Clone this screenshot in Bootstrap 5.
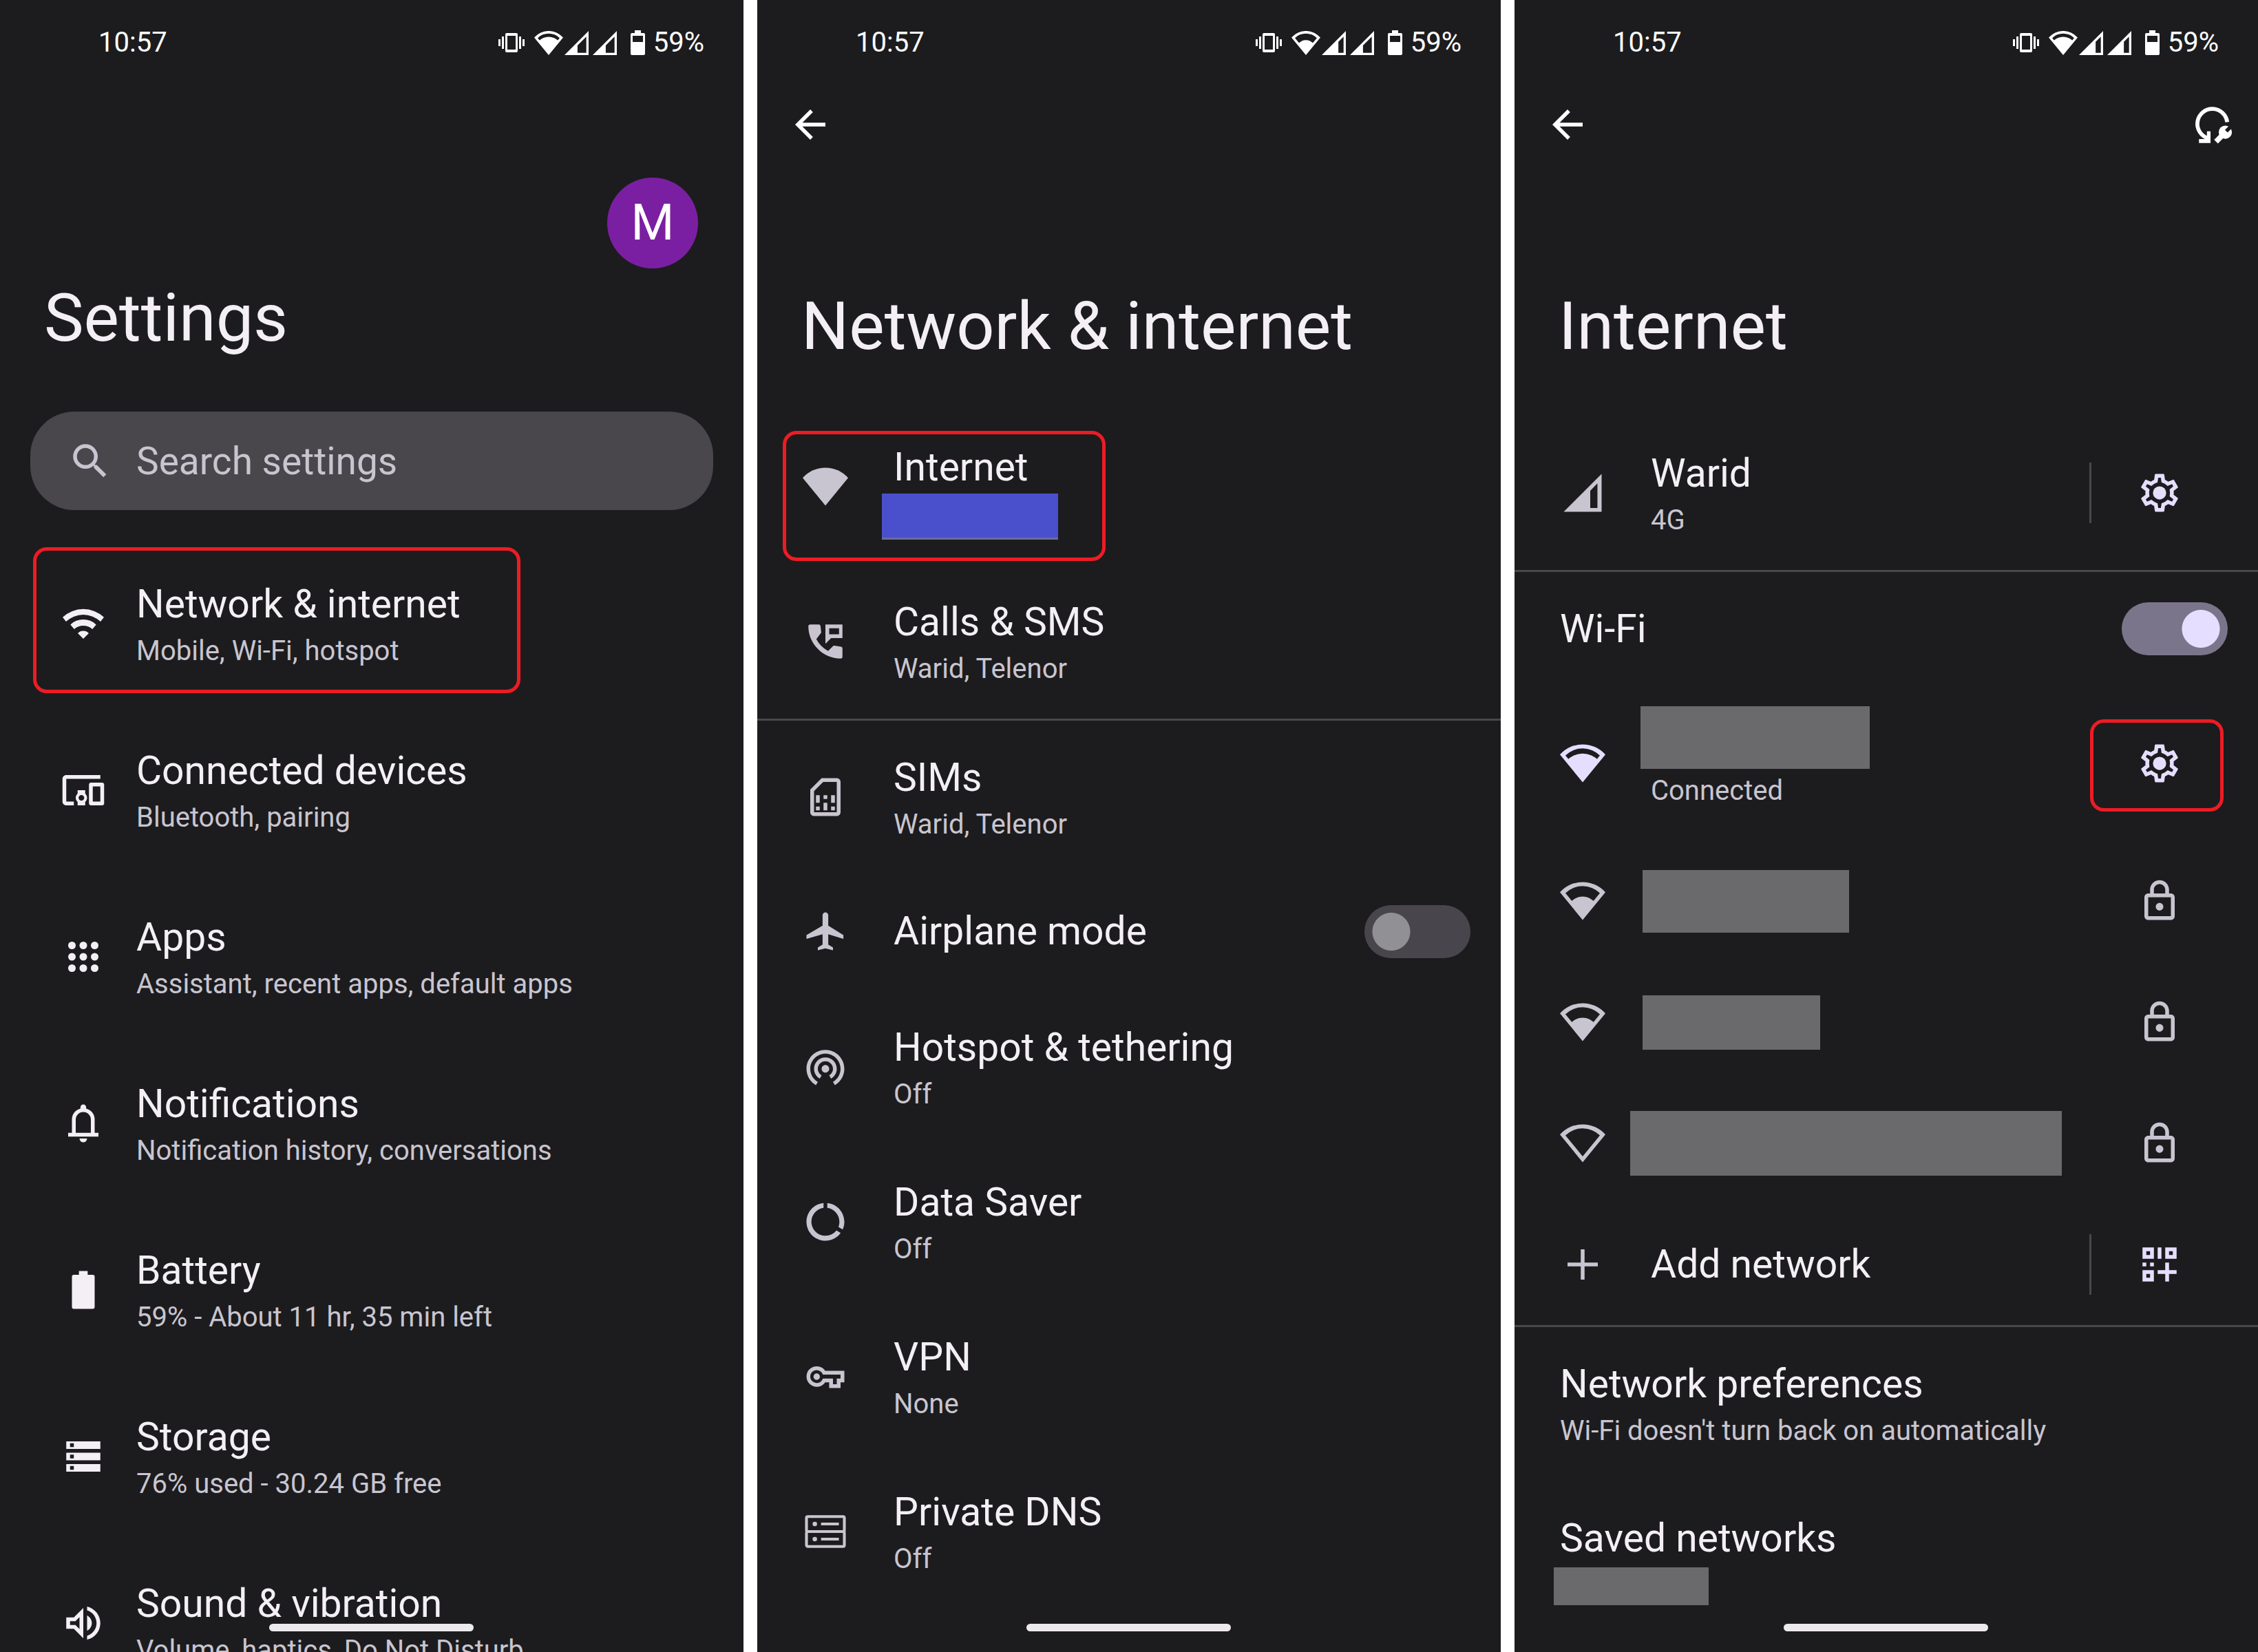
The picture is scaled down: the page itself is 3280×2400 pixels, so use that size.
<!DOCTYPE html>
<html lang="en">
<head>
<meta charset="utf-8">
<meta name="viewport" content="width=device-width, initial-scale=1">
<title>Settings</title>
<link href="https://cdn.jsdelivr.net/npm/bootstrap@5.3.0/dist/css/bootstrap.min.css" rel="stylesheet">
<style>
  :root { --panel: #1c1c1e; --ink: #f4eff4; --soft: #c9c5d0; --accent: #e6deff; --line: #48484a; --gutter: 66px; }
  body { background: #fff; font-family: Roboto, "Liberation Sans", sans-serif; color: var(--ink); }
  .screens { gap: 20px; }
  .screen { flex: 1 1 0; min-width: 0; height: 100vh; background: var(--panel); }
  .ico { width: 66px; height: 66px; fill: currentColor; display: block; flex: none; }
  .ico-btn { padding: 0; border: 0; background: none; color: inherit; }

  .statusbar { height: 124px; padding: 0 57px 0 143px; color: #fff; font-size: 40px; line-height: 48px; }
  .statusbar svg { fill: currentColor; flex: none; display: block; }
  .s-vibe { width: 38px; height: 28px; margin-right: 14px; }
  .s-wifi { width: 42px; height: 35px; margin-right: 2px; }
  .s-cell { width: 35px; height: 35px; margin-right: 6px; }
  .s-batt { width: 21px; height: 36px; margin: 0 12px 0 14px; }

  .toolbar { height: 114px; padding: 0 31px 0 44px; color: #fff; }
  .page-title { font-size: 97px; line-height: 112px; font-weight: 400; margin: 180px 64px 0; }
  .avatar-row { padding: 134px var(--gutter) 0; }
  .avatar-row + .page-title { margin-top: 16px; }
  .avatar { width: 132px; height: 132px; background: #7b1fa2; color: #fff; font-size: 72px; }

  .search { margin: 80px 44px 44px; height: 143px; border-radius: 64px; background: #49464c; color: var(--soft); padding: 0 54px; gap: 34px; }
  .search .form-control { background: none; border: 0; padding: 0; color: inherit; font-size: 55px; line-height: 80px; box-shadow: none; }
  .search .form-control::placeholder { color: var(--soft); opacity: 1; }

  .pref-list { margin: 64px 0 0; }
  .pref-list-main { margin-top: 0; }
  .pref-list-net { margin-top: 73px; }
  .pref { min-height: 225px; padding: 0 44px 0 var(--gutter); color: var(--ink); text-decoration: none; position: relative; }
  .pref-list-main .pref { min-height: 242px; padding-left: 88px; }
  .pref-one { min-height: 168px; }
  .pref-ap { min-height: 176px; }
  .pref-end { padding-right: 110px; }
  .pref-rule { border-top: 3px solid var(--line); }
  .pref .lead-ico { margin-right: 66px; color: var(--soft); }
  .pref-list-main .lead-ico { margin-right: 44px; color: var(--ink); }
  .pref .lit { color: var(--accent); }
  .pref .lock-ico { color: var(--soft); }
  .pref-name { font-size: 57px; line-height: 80px; min-height: 80px; position: relative; }
  .pref-note { font-size: 40px; line-height: 56px; min-height: 56px; color: var(--soft); position: relative; }
  .split { width: 3px; height: 88px; background: var(--line); margin-right: 66px; }

  .mask { display: block; background: #6a6a6c; }
  .mask-over { position: absolute; }
  .mask-addr { left: -17px; top: -2px; width: 256px; height: 67px; background: #4a50cc; border-bottom: 3px solid #6c6a9c; }
  .mask-ssid { left: -15px; top: -15px; width: 333px; height: 91px; }
  .mask-count { left: -9px; top: 2px; width: 225px; height: 55px; }
  .mask-a { width: 300px; height: 91px; margin-left: -12px; }
  .mask-b { width: 258px; height: 79px; margin-left: -12px; }
  .mask-c { width: 627px; height: 94px; margin-left: -30px; }

  .marker { position: absolute; border: 5px solid #ed1c24; border-radius: 20px; pointer-events: none; }
  .marker-menu { left: 48px; top: 10px; width: 708px; height: 212px; }
  .marker-net { left: 37px; top: 32px; width: 469px; height: 189px; }
  .marker-gear { right: 50px; top: 49px; width: 194px; height: 134px; }

  .toggle.form-check-input { width: 154px; height: 77px; margin: 0; border: 0; border-radius: 39px; background: radial-gradient(circle at 39px 50%, #919094 27px, transparent 28px), #48464c; box-shadow: none; flex: none; }
  .toggle.form-check-input:checked { background: radial-gradient(circle at 115px 50%, #e6deff 27px, transparent 28px), #7b758c; }

  .homebar { position: absolute; left: 50%; bottom: 30px; width: 297px; height: 11px; margin-left: -149px; border-radius: 6px; background: #edeaee; }
</style>
</head>
<body>
<svg class="d-none" aria-hidden="true">
  <symbol id="i-vibe" viewBox="0 0 38 28"><path fill-rule="evenodd" d="M12 0h14a2 2 0 0 1 2 2v24a2 2 0 0 1-2 2H12a2 2 0 0 1-2-2V2a2 2 0 0 1 2-2zM13 4v20h12V4z"/><path d="M5 5h3v18H5zM0 9h3v10H0zM30 5h3v18h-3zM35 9h3v10h-3z"/></symbol>
  <symbol id="i-fan" viewBox="0 0 24 24"><path d="M12 22L0 7.4A16 16 0 0 1 24 7.4z"/></symbol>
  <symbol id="i-fan0" viewBox="0 0 24 24"><path fill-rule="evenodd" d="M12 22L0 7.4A16 16 0 0 1 24 7.4zM12 18.9L21.1 7.8A13 13 0 0 0 2.9 7.8z"/></symbol>
  <symbol id="i-fan2" viewBox="0 0 24 24"><path fill-rule="evenodd" d="M12 22L0 7.4A16 16 0 0 1 24 7.4zM12 18.9L21.1 7.8A13 13 0 0 0 2.9 7.8z"/><path d="M12 21L5.6 12.8A8 8 0 0 1 18.4 12.8z"/></symbol>
  <symbol id="i-fan3" viewBox="0 0 24 24"><path fill-rule="evenodd" d="M12 22L0 7.4A16 16 0 0 1 24 7.4zM12 18.9L21.1 7.8A13 13 0 0 0 2.9 7.8z"/><path d="M12 21.5L3.5 10.6A11.5 11.5 0 0 1 20.5 10.6z"/></symbol>
  <symbol id="i-sfan2" viewBox="0 2 24 20"><path fill-rule="evenodd" d="M12 22L0 7.4A16 16 0 0 1 24 7.4zM12 18.9L21.1 7.8A13 13 0 0 0 2.9 7.8z"/><path d="M12 21L5.6 12.8A8 8 0 0 1 18.4 12.8z"/></symbol>
  <symbol id="i-sfan3" viewBox="0 2 24 20"><path fill-rule="evenodd" d="M12 22L0 7.4A16 16 0 0 1 24 7.4zM12 18.9L21.1 7.8A13 13 0 0 0 2.9 7.8z"/><path d="M12 21.5L3.5 10.6A11.5 11.5 0 0 1 20.5 10.6z"/></symbol>
  <symbol id="i-cell2" viewBox="2 2 20 20"><path fill-rule="evenodd" d="M2 22H22V2zM12.8 20.2V14L20.1 6.7V20.2z"/></symbol>
  <symbol id="i-cell3" viewBox="2 2 20 20"><path fill-rule="evenodd" d="M2 22H22V2zM15.8 20.2V11L20.1 6.7V20.2z"/></symbol>
  <symbol id="i-signal" viewBox="0 0 24 24"><path fill-rule="evenodd" d="M2 22H22V2zM16 20V10.9L19.8 7V20z"/></symbol>
  <symbol id="i-sbatt" viewBox="0 0 21 36"><path fill-rule="evenodd" d="M6 0h9v4h4a2 2 0 0 1 2 2v28a2 2 0 0 1-2 2H2a2 2 0 0 1-2-2V6a2 2 0 0 1 2-2h4zM3 8v9h15V8z"/></symbol>
  <symbol id="i-search" viewBox="0 0 24 24"><path d="M15.5 14h-.79l-.28-.27A6.47 6.47 0 0 0 16 9.5 6.5 6.5 0 1 0 9.5 16c1.61 0 3.09-.59 4.23-1.57l.27.28v.79l5 4.99L20.49 19l-4.99-5zm-6 0a4.5 4.5 0 1 1 0-9 4.5 4.5 0 0 1 0 9z"/></symbol>
  <symbol id="i-wifi" viewBox="0 0 24 24"><path d="M1.1 8.6A16 16 0 0 1 22.9 8.6L21.1 10.9A13.3 13.3 0 0 0 2.9 10.9zM5.2 12.5A9.9 9.9 0 0 1 18.8 12.5L16.8 14.9A7.2 7.2 0 0 0 7.2 14.9zM9.1 17.1A4 4 0 0 1 14.9 17.1L12 20z"/></symbol>
  <symbol id="i-devices" viewBox="0 0 24 24"><path d="M3 6h18V4H3c-1.1 0-2 .9-2 2v12c0 1.1.9 2 2 2h4v-2H3V6zm10 6H9v1.78c-.61.55-1 1.33-1 2.22s.39 1.67 1 2.22V20h4v-1.78c.61-.55 1-1.34 1-2.22s-.39-1.67-1-2.22V12zm-2 5.5c-.83 0-1.5-.67-1.5-1.5s.67-1.5 1.5-1.5 1.5.67 1.5 1.5-.67 1.5-1.5 1.5zM22 8h-6c-.5 0-1 .5-1 1v10c0 .5.5 1 1 1h6c.5 0 1-.5 1-1V9c0-.5-.5-1-1-1zm-1 10h-4v-8h4v8z"/></symbol>
  <symbol id="i-apps" viewBox="0 0 24 24"><circle cx="6" cy="6" r="2"/><circle cx="12" cy="6" r="2"/><circle cx="18" cy="6" r="2"/><circle cx="6" cy="12" r="2"/><circle cx="12" cy="12" r="2"/><circle cx="18" cy="12" r="2"/><circle cx="6" cy="18" r="2"/><circle cx="12" cy="18" r="2"/><circle cx="18" cy="18" r="2"/></symbol>
  <symbol id="i-bell" viewBox="0 0 24 24"><path d="M4 19v-2h2v-7q0-2.075 1.25-3.687Q8.5 4.7 10.5 4.2v-.7q0-.625.438-1.062Q11.375 2 12 2t1.062.438q.438.437.438 1.062v.7q2 .5 3.25 2.113Q18 7.925 18 10v7h2v2Zm8 3q-.825 0-1.412-.587Q10 20.825 10 20h4q0 .825-.587 1.413Q12.825 22 12 22Zm-4-5h8v-7q0-1.65-1.175-2.825Q13.65 6 12 6q-1.65 0-2.825 1.175Q8 8.35 8 10Z"/></symbol>
  <symbol id="i-battery" viewBox="0 0 24 24"><path d="M9.7 2h4.6v2H17a1 1 0 0 1 1 1v16a1 1 0 0 1-1 1H7a1 1 0 0 1-1-1V5a1 1 0 0 1 1-1h2.7z"/></symbol>
  <symbol id="i-storage" viewBox="0 0 24 24"><path d="M3 20h18v-4H3v4zm2-3h2v2H5v-2zM3 4v4h18V4H3zm4 3H5V5h2v2zm-4 7h18v-4H3v4zm2-3h2v2H5v-2z"/></symbol>
  <symbol id="i-sound" viewBox="0 0 24 24"><path d="M3 9v6h4l5 5V4L7 9H3zm7-.17v6.34L7.83 13H5v-2h2.83L10 8.83zM16.5 12c0-1.77-1.02-3.29-2.5-4.03v8.05c1.48-.73 2.5-2.25 2.5-4.02zM14 3.23v2.06c2.89.86 5 3.54 5 6.71s-2.11 5.85-5 6.71v2.06c4.01-.91 7-4.49 7-8.77s-2.99-7.86-7-8.77z"/></symbol>
  <symbol id="i-back" viewBox="0 0 24 24"><path d="M20 11H7.83l5.59-5.59L12 4l-8 8 8 8 1.41-1.41L7.83 13H20v-2z"/></symbol>
  <symbol id="i-reset" viewBox="0 0 24 24"><path d="M19 10.7A7.9 7.9 0 1 0 9 19.2" fill="none" stroke="currentColor" stroke-width="2.1"/><path d="M8.3 15.5h1.9v6.2H4.1v-2.1h4.2z"/><path d="M13.1 21L17.3 16.8" stroke="currentColor" stroke-width="2.8"/><circle cx="18" cy="16" r="3.5"/><path d="M18.5 15.5L22.5 11.5" stroke="#1c1c1e" stroke-width="2"/></symbol>
  <symbol id="i-calls" viewBox="0 0 24 24"><path d="M4 3h4.5a.9.9 0 0 1 .9.75l.4 3.5L7.2 10.7a15.5 15.5 0 0 0 6.2 6.3l2.5-2.5q.4-.4.9-.3l3.4.5a.9.9 0 0 1 .8.9V20a1 1 0 0 1-1 1C10.8 21 3 13.2 3 4a1 1 0 0 1 1-1z"/><path fill-rule="evenodd" d="M12 3h9v7.2h-6l-3 3zM14 5v3.2h5.2V5z"/></symbol>
  <symbol id="i-sim" viewBox="0 0 24 24"><path fill-rule="evenodd" d="M18 2h-8L4 8v12c0 1.1.9 2 2 2h12c1.1 0 2-.9 2-2V4c0-1.1-.9-2-2-2zm0 2v16H6V8.83L10.83 4H18zM7 17h2v2H7zM15 17h2v2h-2zM7 11h2v4H7zM11 15h2v4h-2zM11 11h2v2h-2zM15 11h2v4h-2z"/></symbol>
  <symbol id="i-plane" viewBox="0 0 24 24"><path d="M21.5 16v-2L13.5 9V3.5c0-.83-.67-1.5-1.5-1.5s-1.5.67-1.5 1.5V9L2 14v2l8.5-2.5V19L8 20.5V22l4-1 4 1v-1.5L13.5 19v-5.5L21.5 16z"/></symbol>
  <symbol id="i-hotspot" viewBox="0 0 24 24"><path d="M12 11c-1.1 0-2 .9-2 2s.9 2 2 2 2-.9 2-2-.9-2-2-2zm6 2c0-3.31-2.69-6-6-6s-6 2.69-6 6c0 2.22 1.21 4.15 3 5.19l1-1.74c-1.19-.7-2-1.97-2-3.45 0-2.21 1.79-4 4-4s4 1.79 4 4c0 1.48-.81 2.75-2 3.45l1 1.74c1.79-1.04 3-2.97 3-5.19zM12 3C6.48 3 2 7.48 2 13c0 3.7 2.01 6.92 4.99 8.65l1-1.73C5.61 18.53 4 15.96 4 13c0-4.42 3.58-8 8-8s8 3.58 8 8c0 2.96-1.61 5.53-4 6.92l1 1.73c2.99-1.73 5-4.95 5-8.65 0-5.52-4.48-10-10-10z"/></symbol>
  <symbol id="i-saver" viewBox="0 0 24 24"><path d="M13 2.05v2.63c3.6.5 6.4 3.6 6.4 7.32 0 1-.2 1.9-.5 2.74l2.22 1.33c.56-1.24.88-2.62.88-4.07 0-5.18-3.95-9.45-9-9.95zM12 19.4c-4.1 0-7.4-3.3-7.4-7.4 0-3.72 2.8-6.82 6.4-7.32V2.05c-5.06.5-9 4.76-9 9.95 0 5.52 4.47 10 9.99 10 3.31 0 6.24-1.61 8.06-4.09l-2.22-1.33C16.5 18.3 14.4 19.4 12 19.4z"/></symbol>
  <symbol id="i-key" viewBox="0 0 24 24"><path d="M11.3 9.9H21V14H19V17H15V14H11.3A4.4 4.4 0 1 1 11.3 9.9z" fill="none" stroke="currentColor" stroke-width="2"/><circle cx="7.4" cy="12" r="1.7"/></symbol>
  <symbol id="i-dns" viewBox="0 0 24 24"><g fill="none" stroke="currentColor" stroke-width="1.5"><rect x="2" y="4.1" width="20" height="7.9" rx=".7"/><rect x="2" y="12" width="20" height="7.9" rx=".7"/><path d="M9.7 8h9.4M9.7 16h9.4" stroke-width="1.4"/></g><circle cx="6.4" cy="8" r="1.2"/><circle cx="6.4" cy="16" r="1.2"/></symbol>
  <symbol id="i-gear" viewBox="0 0 24 24"><path d="M19.43 12.98c.04-.32.07-.64.07-.98 0-.34-.03-.66-.07-.98l2.11-1.65c.19-.15.24-.42.12-.64l-2-3.46c-.09-.16-.26-.25-.44-.25-.06 0-.12.01-.17.03l-2.49 1c-.52-.4-1.08-.73-1.69-.98l-.38-2.65C14.46 2.18 14.25 2 14 2h-4c-.25 0-.46.18-.49.42l-.38 2.65c-.61.25-1.17.59-1.69.98l-2.49-1c-.06-.02-.12-.03-.18-.03-.17 0-.34.09-.43.25l-2 3.46c-.13.22-.07.49.12.64l2.11 1.65c-.04.32-.07.65-.07.98 0 .33.03.66.07.98l-2.11 1.65c-.19.15-.24.42-.12.64l2 3.46c.09.16.26.25.44.25.06 0 .12-.01.17-.03l2.49-1c.52.4 1.08.73 1.69.98l.38 2.65c.03.24.24.42.49.42h4c.25 0 .46-.18.49-.42l.38-2.65c.61-.25 1.17-.59 1.69-.98l2.49 1c.06.02.12.03.18.03.17 0 .34-.09.43-.25l2-3.46c.12-.22.07-.49-.12-.64l-2.11-1.65zm-1.98-1.71c.04.31.05.52.05.73 0 .21-.02.43-.05.73l-.14 1.13.89.7 1.08.84-.7 1.21-1.27-.51-1.04-.42-.9.68c-.43.32-.84.56-1.25.73l-1.06.43-.16 1.13-.2 1.35h-1.4l-.19-1.35-.16-1.13-1.06-.43c-.43-.18-.83-.41-1.23-.71l-.91-.7-1.06.43-1.27.51-.7-1.21 1.08-.84.89-.7-.14-1.13c-.03-.31-.05-.54-.05-.74s.02-.43.05-.73l.14-1.13-.89-.7-1.08-.84.7-1.21 1.27.51 1.04.42.9-.68c.43-.32.84-.56 1.25-.73l1.06-.43.16-1.13.2-1.35h1.39l.19 1.35.16 1.13 1.06.43c.43.18.83.41 1.23.71l.91.7 1.06-.43 1.27-.51.7 1.21-1.07.85-.89.7.14 1.13z"/><circle cx="12" cy="12" r="3.5"/></symbol>
  <symbol id="i-lock" viewBox="0 0 24 24"><path d="M18 8h-1V6c0-2.76-2.24-5-5-5S7 3.24 7 6v2H6c-1.1 0-2 .9-2 2v10c0 1.1.9 2 2 2h12c1.1 0 2-.9 2-2V10c0-1.1-.9-2-2-2zM9 6c0-1.66 1.34-3 3-3s3 1.34 3 3v2H9V6zm9 14H6V10h12v10zm-6-3c1.1 0 2-.9 2-2s-.9-2-2-2-2 .9-2 2 .9 2 2 2z"/></symbol>
  <symbol id="i-plus" viewBox="0 0 24 24"><path d="M11 4h2v7h7v2h-7v7h-2v-7H4v-2h7z"/></symbol>
  <symbol id="i-qr" viewBox="0 0 24 24"><path fill-rule="evenodd" d="M3 3h6v6H3zM5 5v2h2V5zM15 3h6v6h-6zM17 5v2h2V5zM3 15h6v6H3zM5 17v2h2v-2zM11 3h2v6h-2zM3 11h2v2H3zM7 11h2v2H7zM15 11h2v4h4v2h-4v4h-2v-4h-4v-2h4z"/></symbol>
</svg>

<main class="screens d-flex">

  <section class="screen position-relative overflow-hidden">
    <div class="statusbar d-flex align-items-center">
      <span class="me-auto">10:57</span>
      <svg class="s-vibe"><use href="#i-vibe"/></svg><svg class="s-wifi"><use href="#i-sfan3"/></svg><svg class="s-cell"><use href="#i-cell2"/></svg><svg class="s-cell"><use href="#i-cell2"/></svg><svg class="s-batt"><use href="#i-sbatt"/></svg>
      <span>59%</span>
    </div>
    <div class="avatar-row d-flex justify-content-end">
      <button type="button" class="avatar ico-btn rounded-circle d-flex align-items-center justify-content-center">M</button>
    </div>
    <h1 class="page-title">Settings</h1>
    <div class="search d-flex align-items-center">
      <label for="q" aria-label="Search"><svg class="ico"><use href="#i-search"/></svg></label>
      <input id="q" type="text" class="form-control" placeholder="Search settings">
    </div>
    <nav class="pref-list pref-list-main">
      <a href="#" class="pref d-flex align-items-center"><svg class="ico lead-ico"><use href="#i-wifi"/></svg><div><div class="pref-name">Network &amp; internet</div><div class="pref-note">Mobile, Wi-Fi, hotspot</div></div><span class="marker marker-menu"></span></a>
      <a href="#" class="pref d-flex align-items-center"><svg class="ico lead-ico"><use href="#i-devices"/></svg><div><div class="pref-name">Connected devices</div><div class="pref-note">Bluetooth, pairing</div></div></a>
      <a href="#" class="pref d-flex align-items-center"><svg class="ico lead-ico"><use href="#i-apps"/></svg><div><div class="pref-name">Apps</div><div class="pref-note">Assistant, recent apps, default apps</div></div></a>
      <a href="#" class="pref d-flex align-items-center"><svg class="ico lead-ico"><use href="#i-bell"/></svg><div><div class="pref-name">Notifications</div><div class="pref-note">Notification history, conversations</div></div></a>
      <a href="#" class="pref d-flex align-items-center"><svg class="ico lead-ico"><use href="#i-battery"/></svg><div><div class="pref-name">Battery</div><div class="pref-note">59% - About 11 hr, 35 min left</div></div></a>
      <a href="#" class="pref d-flex align-items-center"><svg class="ico lead-ico"><use href="#i-storage"/></svg><div><div class="pref-name">Storage</div><div class="pref-note">76% used - 30.24 GB free</div></div></a>
      <a href="#" class="pref d-flex align-items-center"><svg class="ico lead-ico"><use href="#i-sound"/></svg><div><div class="pref-name">Sound &amp; vibration</div><div class="pref-note">Volume, haptics, Do Not Disturb</div></div></a>
    </nav>
    <div class="homebar"></div>
  </section>

  <section class="screen position-relative overflow-hidden">
    <div class="statusbar d-flex align-items-center">
      <span class="me-auto">10:57</span>
      <svg class="s-vibe"><use href="#i-vibe"/></svg><svg class="s-wifi"><use href="#i-sfan2"/></svg><svg class="s-cell"><use href="#i-cell3"/></svg><svg class="s-cell"><use href="#i-cell2"/></svg><svg class="s-batt"><use href="#i-sbatt"/></svg>
      <span>59%</span>
    </div>
    <div class="toolbar d-flex align-items-center">
      <button type="button" class="ico-btn" aria-label="Back"><svg class="ico"><use href="#i-back"/></svg></button>
    </div>
    <h1 class="page-title">Network &amp; internet</h1>
    <nav class="pref-list">
      <a href="#" class="pref d-flex align-items-center"><svg class="ico lead-ico"><use href="#i-fan"/></svg><div><div class="pref-name">Internet</div><div class="pref-note"><span class="mask mask-over mask-addr"></span></div></div><span class="marker marker-net"></span></a>
      <a href="#" class="pref d-flex align-items-center"><svg class="ico lead-ico"><use href="#i-calls"/></svg><div><div class="pref-name">Calls &amp; SMS</div><div class="pref-note">Warid, Telenor</div></div></a>
      <a href="#" class="pref pref-rule d-flex align-items-center"><svg class="ico lead-ico"><use href="#i-sim"/></svg><div><div class="pref-name">SIMs</div><div class="pref-note">Warid, Telenor</div></div></a>
      <div class="pref pref-one d-flex align-items-center"><svg class="ico lead-ico"><use href="#i-plane"/></svg><label class="pref-name me-auto" for="airplane">Airplane mode</label><input id="airplane" class="form-check-input toggle" type="checkbox" role="switch"></div>
      <a href="#" class="pref d-flex align-items-center"><svg class="ico lead-ico"><use href="#i-hotspot"/></svg><div><div class="pref-name">Hotspot &amp; tethering</div><div class="pref-note">Off</div></div></a>
      <a href="#" class="pref d-flex align-items-center"><svg class="ico lead-ico"><use href="#i-saver"/></svg><div><div class="pref-name">Data Saver</div><div class="pref-note">Off</div></div></a>
      <a href="#" class="pref d-flex align-items-center"><svg class="ico lead-ico"><use href="#i-key"/></svg><div><div class="pref-name">VPN</div><div class="pref-note">None</div></div></a>
      <a href="#" class="pref d-flex align-items-center"><svg class="ico lead-ico"><use href="#i-dns"/></svg><div><div class="pref-name">Private DNS</div><div class="pref-note">Off</div></div></a>
    </nav>
    <div class="homebar"></div>
  </section>

  <section class="screen position-relative overflow-hidden">
    <div class="statusbar d-flex align-items-center">
      <span class="me-auto">10:57</span>
      <svg class="s-vibe"><use href="#i-vibe"/></svg><svg class="s-wifi"><use href="#i-sfan3"/></svg><svg class="s-cell"><use href="#i-cell3"/></svg><svg class="s-cell"><use href="#i-cell3"/></svg><svg class="s-batt"><use href="#i-sbatt"/></svg>
      <span>59%</span>
    </div>
    <div class="toolbar d-flex align-items-center justify-content-between">
      <button type="button" class="ico-btn" aria-label="Back"><svg class="ico"><use href="#i-back"/></svg></button>
      <button type="button" class="ico-btn" aria-label="Reset"><svg class="ico"><use href="#i-reset"/></svg></button>
    </div>
    <h1 class="page-title">Internet</h1>
    <div class="pref-list pref-list-net">
      <div class="pref pref-end d-flex align-items-center"><svg class="ico lead-ico"><use href="#i-signal"/></svg><div class="me-auto"><div class="pref-name">Warid</div><div class="pref-note">4G</div></div><span class="split"></span><button type="button" class="ico-btn lit" aria-label="Warid settings"><svg class="ico"><use href="#i-gear"/></svg></button></div>
      <div class="pref pref-one pref-rule d-flex align-items-center"><label class="pref-name me-auto" for="wifi">Wi-Fi</label><input id="wifi" class="form-check-input toggle" type="checkbox" role="switch" checked></div>
      <div class="pref pref-end d-flex align-items-center"><svg class="ico lead-ico lit"><use href="#i-fan3"/></svg><div class="me-auto"><div class="pref-name"><span class="mask mask-over mask-ssid"></span></div><div class="pref-note">Connected</div></div><button type="button" class="ico-btn lit" aria-label="Network details"><svg class="ico"><use href="#i-gear"/></svg></button><span class="marker marker-gear"></span></div>
      <a href="#" class="pref pref-ap pref-end d-flex align-items-center" aria-label="Secured network"><svg class="ico lead-ico"><use href="#i-fan2"/></svg><span class="mask mask-a me-auto"></span><svg class="ico lock-ico"><use href="#i-lock"/></svg></a>
      <a href="#" class="pref pref-ap pref-end d-flex align-items-center" aria-label="Secured network"><svg class="ico lead-ico"><use href="#i-fan2"/></svg><span class="mask mask-b me-auto"></span><svg class="ico lock-ico"><use href="#i-lock"/></svg></a>
      <a href="#" class="pref pref-ap pref-end d-flex align-items-center" aria-label="Secured network"><svg class="ico lead-ico"><use href="#i-fan0"/></svg><span class="mask mask-c me-auto"></span><svg class="ico lock-ico"><use href="#i-lock"/></svg></a>
      <div class="pref pref-ap pref-end d-flex align-items-center"><svg class="ico lead-ico"><use href="#i-plus"/></svg><div class="pref-name me-auto">Add network</div><span class="split"></span><button type="button" class="ico-btn lit" aria-label="Scan QR code"><svg class="ico"><use href="#i-qr"/></svg></button></div>
      <a href="#" class="pref pref-rule d-flex align-items-center"><div><div class="pref-name">Network preferences</div><div class="pref-note">Wi-Fi doesn't turn back on automatically</div></div></a>
      <a href="#" class="pref d-flex align-items-center"><div><div class="pref-name">Saved networks</div><div class="pref-note"><span class="mask mask-over mask-count"></span></div></div></a>
    </div>
    <div class="homebar"></div>
  </section>

</main>
<script src="https://cdn.jsdelivr.net/npm/bootstrap@5.3.0/dist/js/bootstrap.bundle.min.js"></script>
</body>
</html>
